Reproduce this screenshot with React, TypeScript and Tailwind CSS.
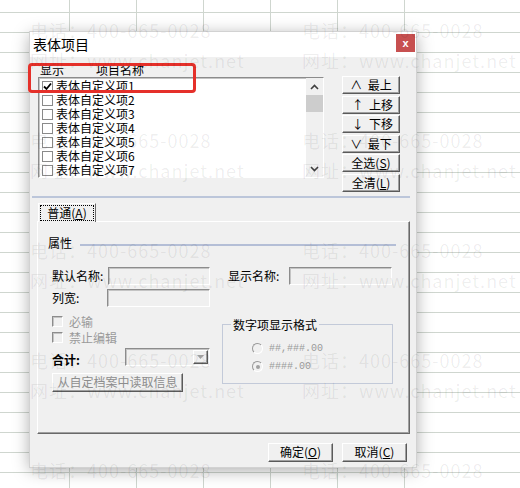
import React from "react";

const sunken =
  "border border-t-[#8c8c8c] border-l-[#8c8c8c] border-r-white border-b-white shadow-[inset_1px_1px_0_#c4c4c4]";
const raised =
  "border border-t-white border-l-white border-r-[#5a5a5a] border-b-[#5a5a5a] shadow-[inset_-1px_-1px_0_#a0a0a0] bg-[#f0f0f0]";

const items = [1, 2, 3, 4, 5, 6, 7].map((i) => `表体自定义项${i}`);

function ListCheck({ checked }: { checked?: boolean }) {
  return (
    <span className="w-[11px] h-[11px] border border-[#8a8a8a] bg-white flex items-center justify-center shrink-0">
      {checked && (
        <svg width="9" height="9" viewBox="0 0 9 9">
          <polyline points="1,4.5 3.5,7 8,1.5" fill="none" stroke="#000" strokeWidth="1.8" />
        </svg>
      )}
    </span>
  );
}

function GreyCheck() {
  return <span className={`w-[11px] h-[11px] bg-[#f0f0f0] shrink-0 ${sunken}`} />;
}

function Radio({ checked }: { checked?: boolean }) {
  return (
    <span className="w-[11px] h-[11px] rounded-full border border-t-[#9a9a9a] border-l-[#9a9a9a] border-r-white border-b-white bg-[#f0f0f0] flex items-center justify-center shrink-0">
      {checked && <span className="w-[4px] h-[4px] rounded-full bg-[#a0a0a0]" />}
    </span>
  );
}

function Chevron({ up }: { up?: boolean }) {
  return (
    <svg width="9" height="6" viewBox="0 0 9 6">
      <polyline
        points={up ? "1,5 4.5,1.5 8,5" : "1,1 4.5,4.5 8,1"}
        fill="none"
        stroke="#404040"
        strokeWidth="1.6"
      />
    </svg>
  );
}

function SideButton({ children }: { children: React.ReactNode }) {
  return (
    <div className={`h-[18px] flex items-center justify-center text-[12px] leading-[14px] whitespace-pre ${raised}`}>
      {children}
    </div>
  );
}

export default function App() {
  const watermark = [0, 1, 2, 3, 4];

  return (
    <div className="relative w-[520px] h-[488px] overflow-hidden bg-white bg-[linear-gradient(to_bottom,transparent_12px,#cfd6cf_12px,#cfd6cf_13px,transparent_13px)] bg-[length:100%_20px] pt-[32px] pl-[30px] font-['Noto_Sans_CJK_SC',sans-serif] text-black">
      {/* sheet columns behind the dialog */}
      <div className="absolute left-[3px] top-0 bottom-0 w-[402px] bg-[linear-gradient(to_right,transparent_66px,#cfd6cf_66px)] bg-[length:67px_100%]" />

      {/* Dialog */}
      <div className="relative flex flex-col w-[386px] h-[435px] bg-[#f0f0f0] ring-1 ring-[#d2d2d2] shadow-[0_3px_16px_rgba(0,0,0,0.35)]">
        {/* Title bar */}
        <div className="h-[25px] bg-white flex justify-between pl-[3px] pr-[1px]">
          <span className="text-[14px] leading-[25px]">表体项目</span>
          <div className="mt-[2px] w-[19px] h-[18px] bg-[#c75050] flex items-center justify-center text-white text-[11px] font-bold font-['Liberation_Sans',sans-serif] leading-none">
            x
          </div>
        </div>

        {/* Item list and move buttons */}
        <div className="flex pl-[8px] pt-[5px]">
          <div className="flex flex-col w-[286px]">
            <div className="h-[15px] flex text-[12px] leading-[15px]">
              <span className="ml-[2px] w-[56px]">显示</span>
              <span>项目名称</span>
            </div>
            <div className={`h-[101px] flex bg-white ${sunken} shadow-[inset_1px_1px_0_#696969]`}>
              <div className="flex-1 flex flex-col pt-[1px] overflow-hidden">
                {items.map((it, i) => (
                  <div key={it} className="h-[14px] flex items-center pl-[3px] gap-[3px] text-[12px] leading-[14px]">
                    <ListCheck checked={i === 0} />
                    <span>{it}</span>
                  </div>
                ))}
              </div>
              <div className="w-[17px] bg-[#f0f0f0] flex flex-col">
                <div className="h-[17px] flex items-center justify-center">
                  <Chevron up />
                </div>
                <div className="h-[17px] bg-[#cdcdcd]" />
                <div className="flex-1" />
                <div className="h-[17px] flex items-center justify-center">
                  <Chevron />
                </div>
              </div>
            </div>
          </div>
          <div className="ml-[18px] pt-[14px] w-[58px] flex flex-col gap-[1.6px]">
            <SideButton>{"∧  最上"}</SideButton>
            <SideButton>{" ↑  上移"}</SideButton>
            <SideButton>{" ↓  下移"}</SideButton>
            <SideButton>{"∨  最下"}</SideButton>
            <SideButton>
              全选(<u>S</u>)
            </SideButton>
            <SideButton>
              全清(<u>L</u>)
            </SideButton>
          </div>
        </div>

        <div className="mt-[4px] ml-[2px] w-[378px] h-[2px] bg-[#bcc6da]" />

        {/* Tab */}
        <div className="relative z-10 mt-[5px] ml-[8px] mb-[-1px] w-[58px] h-[19px] p-[1px] bg-[#f0f0f0] border-t border-l border-t-white border-l-white border-r border-r-[#696969]">
          <div className="h-full border border-dotted border-black flex items-center justify-center text-[12px] leading-[14px]">
            普通(<u>A</u>)
          </div>
        </div>

        {/* Tab panel */}
        <div className="ml-[7px] w-[373px] h-[213px] flex flex-col border border-t-white border-l-white border-r-[#696969] border-b-[#696969] shadow-[inset_-1px_-1px_0_#a0a0a0] text-[12px] leading-[14px]">
          <div className="mt-[14px] h-[14px] flex items-center pl-[10px] pr-[13px]">
            <span>属性</span>
            <div className="flex-1 ml-[8px] mt-[5px] h-[2px] bg-[#b4bed6]" />
          </div>

          <div className="mt-[17px] h-[18px] flex items-center pl-[14px]">
            <span className="w-[56px]">默认名称:</span>
            <div className={`w-[102px] h-[18px] bg-[#f0f0f0] ${sunken}`} />
            <span className="ml-[18px] w-[61px]">显示名称:</span>
            <div className={`w-[103px] h-[18px] bg-[#f0f0f0] ${sunken}`} />
          </div>

          <div className="mt-[4px] h-[18px] flex items-center pl-[14px]">
            <span className="w-[55px]">列宽:</span>
            <div className={`w-[103px] h-[18px] bg-[#f0f0f0] ${sunken}`} />
          </div>

          <div className="mt-[8px] flex pl-[14px]">
            <div className="w-[170px] flex flex-col">
              <div className="h-[14px] flex items-center gap-[6px] text-[#9a9a9a]">
                <GreyCheck />
                <span>必输</span>
              </div>
              <div className="mt-[2px] h-[14px] flex items-center gap-[6px] text-[#9a9a9a]">
                <GreyCheck />
                <span>禁止编辑</span>
              </div>
              <div className="mt-[3px] h-[18px] flex">
                <span className="w-[73px] pt-[5px] font-bold">合计:</span>
                <div className={`w-[85px] h-[18px] bg-[#f0f0f0] flex justify-end p-[1px] ${sunken}`}>
                  <div className={`w-[15px] h-full flex items-center justify-center ${raised}`}>
                    <svg width="7" height="4" viewBox="0 0 7 4">
                      <polygon points="0,0 7,0 3.5,4" fill="#a0a0a0" />
                    </svg>
                  </div>
                </div>
              </div>
              <div className={`mt-[7px] w-[131px] h-[19px] flex items-center justify-center text-[#8d8d8d] ${raised}`}>
                从自定档案中读取信息
              </div>
            </div>

            <fieldset className="mt-[3px] w-[171px] h-[66px] border border-[#c3cad9]">
              <legend className="ml-[8px] px-[2px] text-[12px] leading-[14px]">数字项显示格式</legend>
              <div className="mt-[10px] pl-[29px] h-[14px] flex items-center gap-[6px]">
                <Radio />
                <span className="font-['Liberation_Mono',monospace] text-[10px] text-[#9a9a9a]">##,###.00</span>
              </div>
              <div className="mt-[4px] pl-[29px] h-[14px] flex items-center gap-[6px]">
                <Radio checked />
                <span className="font-['Liberation_Mono',monospace] text-[10px] text-[#9a9a9a]">####.00</span>
              </div>
            </fieldset>
          </div>
        </div>

        {/* OK / Cancel */}
        <div className="mt-[9px] flex justify-end gap-[9px] pr-[9px] text-[12px] leading-[14px]">
          <div className={`w-[65px] h-[19px] flex items-center justify-center ${raised}`}>
            确定(<u>O</u>)
          </div>
          <div className={`w-[65px] h-[19px] flex items-center justify-center ${raised}`}>
            取消(<u>C</u>)
          </div>
        </div>
      </div>

      {/* red annotation box */}
      <div className="absolute z-20 left-[28px] top-[63px] w-[168px] h-[30px] border-[3px] border-[#e5302a] rounded-[4px]" />

      {/* watermark */}
      <div className="absolute z-30 inset-0 pointer-events-none pl-[30px] pt-[15px] grid grid-cols-[272px_215px] gap-y-[50px] content-start text-[18px] leading-[30px] tracking-[1px] text-[rgba(0,0,0,0.07)] whitespace-nowrap">
        {watermark.map((r) =>
          [0, 1].map((c) => (
            <div key={`${r}-${c}`} className="flex flex-col">
              <span>电话：400-665-0028</span>
              <span>网址：www.chanjet.net</span>
            </div>
          ))
        )}
      </div>
    </div>
  );
}
